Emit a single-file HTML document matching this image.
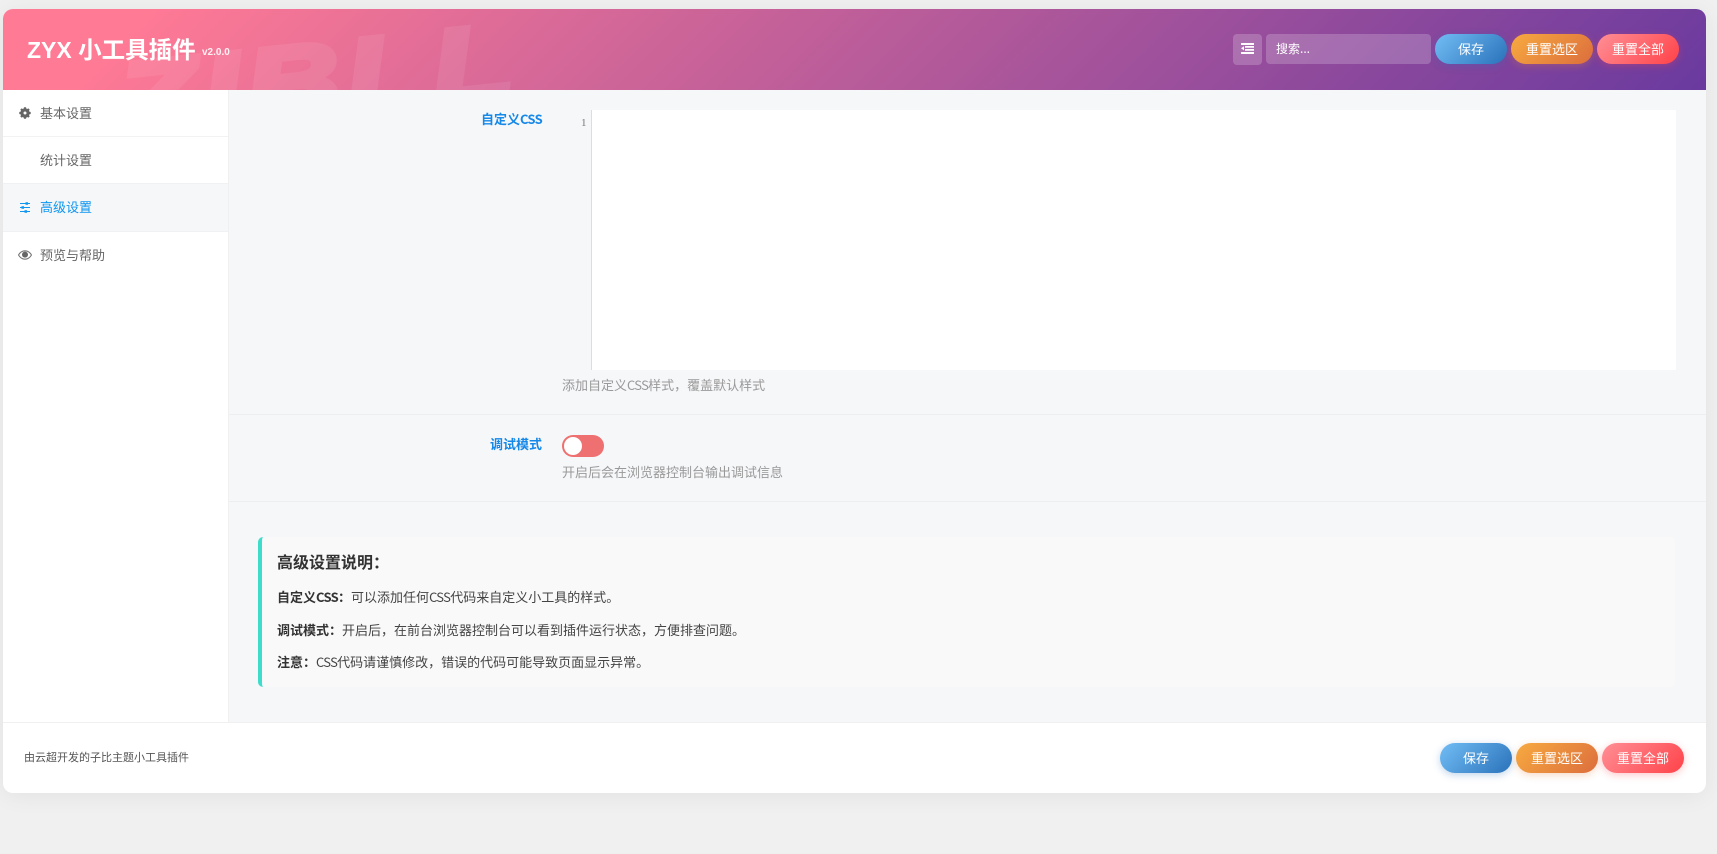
<!DOCTYPE html>
<html lang="zh"><head><meta charset="utf-8"><title>ZYX 小工具插件</title>
<style>
*{box-sizing:border-box}
html,body{margin:0;padding:0;width:1717px;height:854px;overflow:hidden;background:#f0f0f0;font-family:"Noto Sans CJK SC","WenQuanYi Zen Hei",sans-serif;font-size:13px}
.a{position:absolute;white-space:nowrap}
#card{position:absolute;left:3px;top:9px;width:1703px;height:784px;background:#fff;border-radius:10px;box-shadow:0 3px 24px rgba(0,0,0,.06)}
#hd{position:absolute;left:3px;top:9px;width:1703px;height:81px;border-radius:10px 10px 0 0;overflow:hidden;background:linear-gradient(135deg,#ff7a95 0%,#ff7a95 8%,#6a3a9f 100%)}
#wm{position:absolute;left:118px;top:40px;font:italic bold 105px "Liberation Sans",sans-serif;letter-spacing:5px;color:#fff;line-height:105px;transform:rotate(-6deg) scaleX(1.25);transform-origin:0 89px;-webkit-text-stroke:6px #fff;opacity:.08}
.btn{position:absolute;height:30px;border-radius:15px;color:#fff;text-align:center;line-height:30px;font-size:13px}
.bl{width:72px;background:linear-gradient(135deg,#72bdf5,#2a72ba);box-shadow:0 2px 8px rgba(42,114,186,.3)}
.or{width:82px;background:linear-gradient(135deg,#f7aa40,#dc6e3d);box-shadow:0 2px 8px rgba(230,130,60,.3)}
.rd{width:82px;background:linear-gradient(135deg,#ff8f95,#ff4249);box-shadow:0 2px 8px rgba(255,70,80,.3)}
#side{position:absolute;left:3px;top:90px;width:226px;height:633px;background:#fff;border-right:1px solid #f0f0f0}
.it{position:absolute;left:0;width:225px;color:#666;line-height:20px}
.it span{position:absolute;left:37px}
#main{position:absolute;left:229px;top:90px;width:1477px;height:633px;background:#f6f7f9}
.lb{position:absolute;color:#1588e8;font-weight:bold;text-align:right;width:200px}
.hint{color:#999}
.sep{position:absolute;left:229px;width:1477px;height:1px;background:#eceef0}
.note{color:#444}
.note b{color:#333}
i{font-style:normal;letter-spacing:-.7px}
</style></head><body>
<div id="card"></div>
<div id="hd"><div id="wm">ZIBLL</div></div>
<div class="a" style="left:27px;top:33px;color:#fff;font-weight:bold;font-size:23.500px;line-height:30px"><span style='font-family:"Liberation Sans";font-size:23px'>ZYX </span>小工具插件</div>
<div class="a" style="left:202px;top:46px;color:#fff;font-weight:bold;font-size:10px;line-height:14px;opacity:.9;font-family:'Liberation Sans'">v2.0.0</div>
<div class="a" style="left:1233px;top:34px;width:29px;height:31px;border-radius:4px;background:rgba(255,255,255,.2)"></div>
<svg class="a" style="left:1241px;top:43px" width="13" height="11" viewBox="0 0 13 11"><path d="M0 0h13v2H0zM4 3h9v1.800H4zM4 6h9v1.800H4zM0 9h13v2H0z" fill="#fff"/><path d="M3 3.200v4.200L0 5.300z" fill="#fff"/></svg>
<div class="a" style="left:1266px;top:34px;width:165px;height:30px;border-radius:4px;background:rgba(255,255,255,.2);color:#fff;font-size:12px;line-height:30px;padding-left:10px">搜索...</div>
<div class="btn bl" style="left:1435px;top:34px">保存</div>
<div class="btn or" style="left:1511px;top:34px">重置选区</div>
<div class="btn rd" style="left:1597px;top:34px">重置全部</div>

<div id="side">
<div class="a" style="left:0;top:46px;width:225px;height:1px;background:#f2f2f2"></div>
<div class="a" style="left:0;top:93px;width:225px;height:49px;background:#f6f7f9;border-top:1px solid #f0f1f2;border-bottom:1px solid #f0f1f2"></div>
</div>
<div class="it" style="top:103px"><span style="left:40px">基本设置</span></div>
<div class="it" style="top:150px"><span style="left:40px">统计设置</span></div>
<div class="it" style="top:197px;color:#0e96f0"><span style="left:40px">高级设置</span></div>
<div class="it" style="top:245px"><span style="left:40px">预览与帮助</span></div>
<svg class="a" style="left:19px;top:107px" width="12" height="12" viewBox="0 0 12 12"><circle cx="6" cy="6" r="3.300" fill="none" stroke="#666" stroke-width="2.800"/><path d="M6 .3v11.400M.3 6h11.400M2 2l8 8M10 2l-8 8" stroke="#666" stroke-width="2.200"/><circle cx="6" cy="6" r="1.500" fill="#fff"/></svg>
<svg class="a" style="left:19px;top:202px" width="12" height="11" viewBox="0 0 12 11"><path d="M1 1.500h10M1 5.500h10M1 9.500h10" stroke="#0e96f0" stroke-width="1"/><path d="M6.500 .2h2.500v2.600H6.500zM2.500 4.200H5v2.600H2.500zM5.500 8.200H8v2.600H5.500z" fill="#0e96f0"/></svg>
<svg class="a" style="left:18px;top:250px" width="14" height="10" viewBox="0 0 14 10"><path d="M.5 5C2.300 2 4.500.8 7 .8S11.700 2 13.500 5C11.700 8 9.500 9.200 7 9.200S2.300 8 .5 5z" fill="none" stroke="#777" stroke-width="1.100"/><circle cx="7" cy="4.600" r="3" fill="#666"/></svg>

<div id="main"></div>
<div class="lb a" style="left:342px;top:109px">自定义<i>CSS</i></div>
<div class="a" style="left:581px;top:116px;color:#777;font:11px/14px 'Liberation Serif',serif">1</div>
<div class="a" style="left:591px;top:110px;width:1px;height:260px;background:#ddd"></div>
<div class="a" style="left:592px;top:110px;width:1084px;height:260px;background:#fff"></div>
<div class="a hint" style="left:562px;top:376px;line-height:18px">添加自定义<i>CSS</i>样式，覆盖默认样式</div>
<div class="sep" style="top:414px"></div>
<div class="lb a" style="left:342px;top:434px">调试模式</div>
<div class="a" style="left:562px;top:435px;width:42px;height:22px;border-radius:11px;background:#ef7070"></div>
<div class="a" style="left:564px;top:437px;width:18px;height:18px;border-radius:50%;background:#fff"></div>
<div class="a hint" style="left:562px;top:463px;line-height:18px">开启后会在浏览器控制台输出调试信息</div>
<div class="sep" style="top:501px"></div>

<div class="a" style="left:258px;top:537px;width:1417px;height:150px;background:#f9f9f9;border-left:4px solid #3fdccb;border-radius:5px"></div>
<div class="a" style="left:277px;top:550px;font-size:16px;font-weight:bold;color:#333;line-height:22px">高级设置说明：</div>
<div class="a note" style="left:277px;top:588px;line-height:18px"><b>自定义<i>CSS</i>：</b>可以添加任何<i>CSS</i>代码来自定义小工具的样式。</div>
<div class="a note" style="left:277px;top:621px;line-height:18px"><b>调试模式：</b>开启后，在前台浏览器控制台可以看到插件运行状态，方便排查问题。</div>
<div class="a note" style="left:277px;top:653px;line-height:18px"><b>注意：</b><i>CSS</i>代码请谨慎修改，错误的代码可能导致页面显示异常。</div>

<div class="a" style="left:3px;top:722px;width:1703px;height:1px;background:#f0f0f0"></div>
<div class="a" style="left:24px;top:750px;font-size:11px;color:#555;line-height:14px">由云超开发的子比主题小工具插件</div>
<div class="btn bl" style="left:1440px;top:743px">保存</div>
<div class="btn or" style="left:1516px;top:743px">重置选区</div>
<div class="btn rd" style="left:1602px;top:743px">重置全部</div>
</body></html>
